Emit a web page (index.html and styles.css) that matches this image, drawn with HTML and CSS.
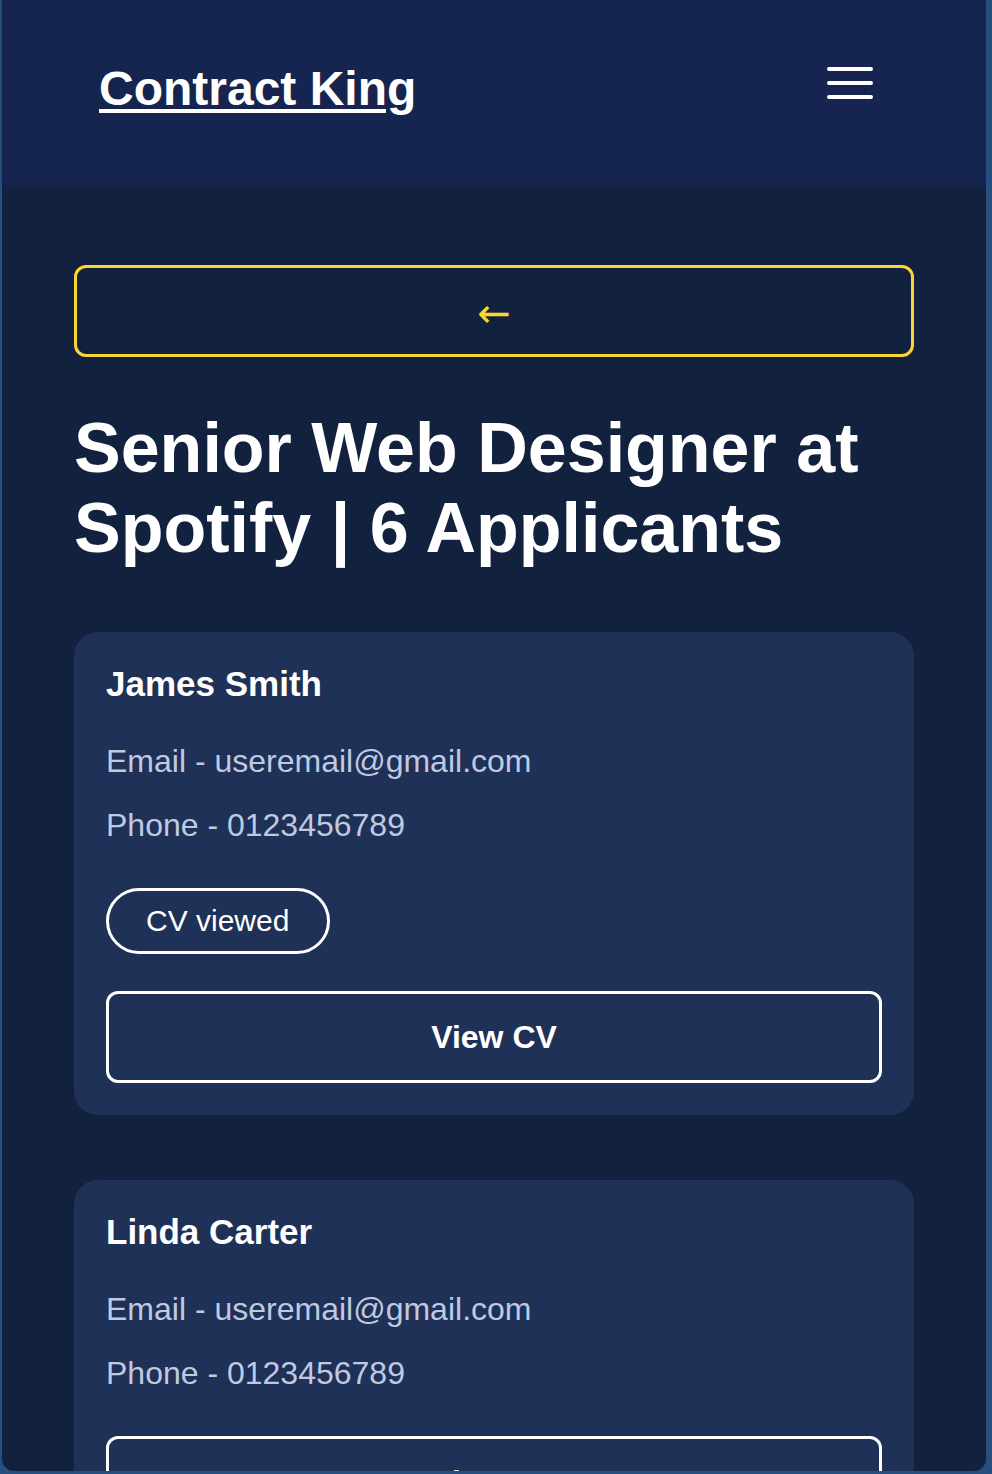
FILE: index.html
```html
<!DOCTYPE html>
<html lang="en">
<head>
  <meta charset="UTF-8">
  <title>Contract King - Applicants</title>
  <link rel="stylesheet" href="styles.css">
</head>
<body>
  <div class="window">

    <header class="topbar">
      <a href="#" class="logo">Contract King</a>
      <button class="menu-btn" aria-label="Menu">
        <svg width="46" height="34" viewBox="0 0 46 34">
          <line x1="2" y1="3" x2="44" y2="3" />
          <line x1="2" y1="17" x2="44" y2="17" />
          <line x1="2" y1="31" x2="44" y2="31" />
        </svg>
      </button>
    </header>

    <main class="content">
      <button class="back-btn">&larr;</button>

      <h1 class="job-title">Senior Web Designer at Spotify | 6 Applicants</h1>

      <div class="applicant">
        <h2 class="applicant-name">James Smith</h2>
        <p class="info">Email - useremail@gmail.com</p>
        <p class="info">Phone - 0123456789</p>
        <span class="status">CV viewed</span>
        <button class="view-btn">View CV</button>
      </div>

      <div class="applicant">
        <h2 class="applicant-name">Linda Carter</h2>
        <p class="info">Email - useremail@gmail.com</p>
        <p class="info">Phone - 0123456789</p>
        <button class="view-btn">View CV</button>
      </div>
    </main>

  </div>
</body>
</html>
```

FILE: styles.css
```css
html, body {
  margin: 0;
  padding: 0;
}

body {
  background: #264f80;
  font-family: "Liberation Sans", Arial, sans-serif;
  color: #fff;
}

.window {
  margin: 0 6px 0 2px;
  height: calc(100vh - 3px);
  overflow: hidden;
  background: #12223e;
  border-radius: 0 0 12px 12px;
}

.topbar {
  height: 185px;
  box-sizing: border-box;
  padding: 0 113px 0 97px;
  background: #16254f;
  display: flex;
  align-items: center;
  justify-content: space-between;
}

.logo {
  color: #fff;
  font-size: 48px;
  font-weight: bold;
  text-decoration: underline;
  text-decoration-thickness: 4px;
  text-underline-offset: 4px;
  margin-bottom: 9px;
}

.menu-btn {
  background: none;
  border: none;
  padding: 0;
  margin-bottom: 19px;
  display: flex;
}

.menu-btn line {
  stroke: #fff;
  stroke-width: 4;
  stroke-linecap: round;
}

.content {
  padding: 80px 72px;
}

.back-btn {
  display: block;
  width: 100%;
  height: 92px;
  background: transparent;
  border: 3px solid #fcd535;
  border-radius: 12px;
  color: #fcd535;
  font-family: "DejaVu Sans", sans-serif;
  font-size: 40px;
  padding: 4px 0 0;
}

.job-title {
  margin: 51px 0 64px;
  font-size: 70px;
  line-height: 80px;
  font-weight: bold;
}

.applicant {
  background: #1f3157;
  border-radius: 24px;
  padding: 32px 32px 32px;
  margin-bottom: 65px;
  display: flex;
  flex-direction: column;
  align-items: flex-start;
}

.applicant-name {
  margin: 0 0 37px;
  font-size: 35px;
  line-height: 40px;
}

.info {
  margin: 0 0 24px;
  font-size: 32px;
  line-height: 40px;
  color: #bfcae2;
}

.info + .info {
  margin-bottom: 43px;
}

.status {
  border: 3px solid #fff;
  border-radius: 40px;
  padding: 13px 38px 13px 37px;
  font-size: 30px;
  line-height: 34px;
  margin-bottom: 37px;
}

.view-btn {
  width: 100%;
  height: 92px;
  background: transparent;
  border: 3px solid #fff;
  border-radius: 12px;
  color: #fff;
  font-family: "Liberation Sans", Arial, sans-serif;
  font-size: 32px;
  font-weight: bold;
}
```
